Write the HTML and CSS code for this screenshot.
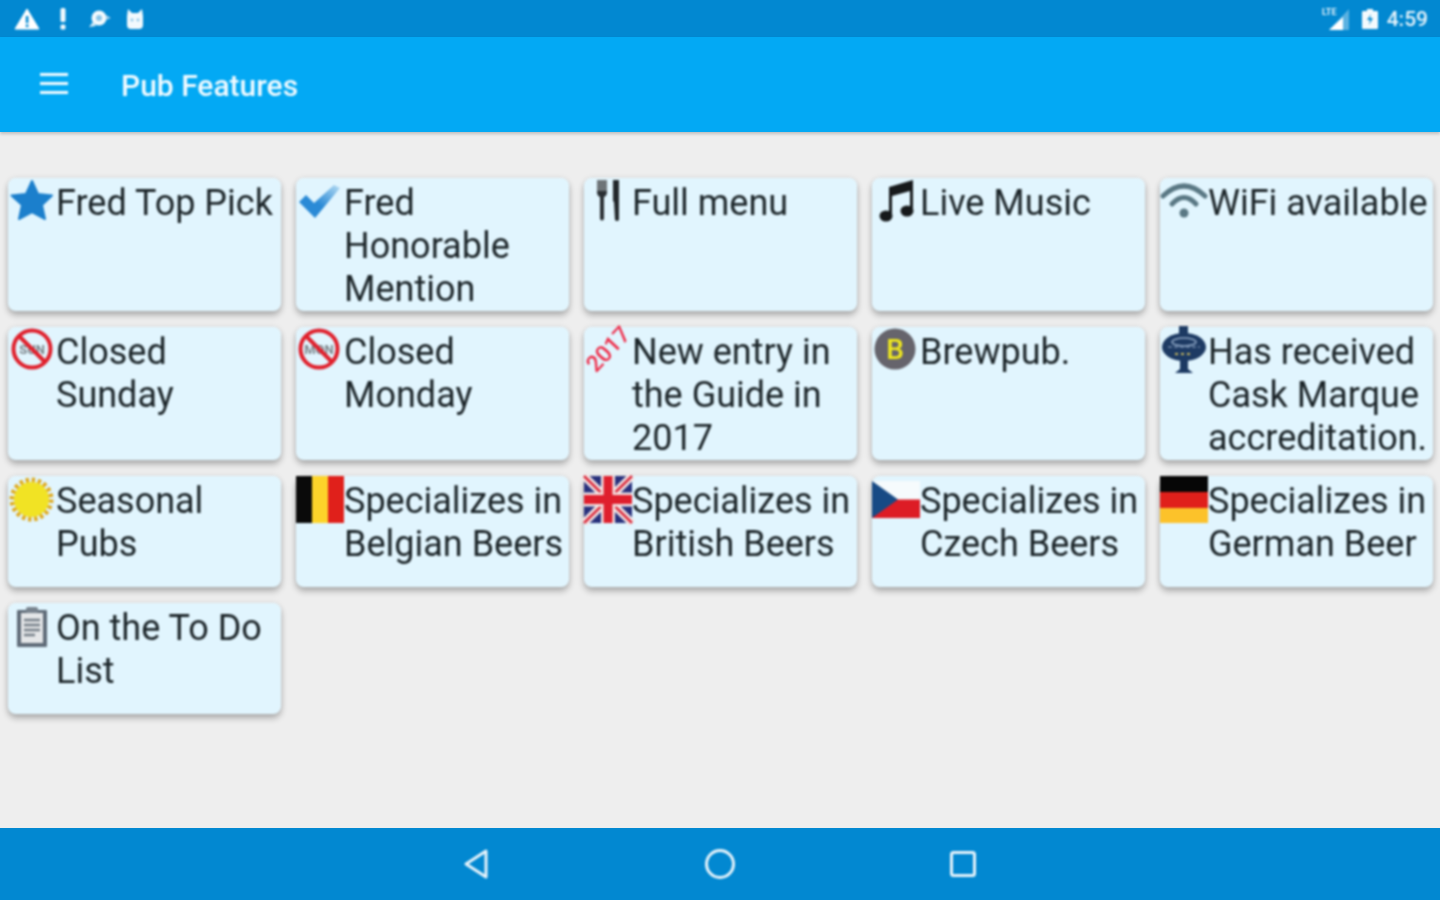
FILE: index.html
```html
<!DOCTYPE html>
<html lang="en">
<head>
    <meta charset="UTF-8">
    <meta name="viewport" content="width=device-width, initial-scale=1.0">
    <title>Pub Features</title>
    <link rel="stylesheet" href="styles.css">
</head>
<body>
    <div class="screen">
        <div class="status-bar">
            <div class="status-left">
                <svg class="st-warn" width="26" height="22" viewBox="0 0 26 22"><path d="M13 1 L25 21 H1 Z" fill="#fff" stroke="#fff" stroke-linejoin="round"/><rect x="11.8" y="8" width="2.6" height="7" fill="#0288d1"/><rect x="11.8" y="16.5" width="2.6" height="2.6" fill="#0288d1"/></svg>
                <svg class="st-bang" width="8" height="22" viewBox="0 0 8 22"><rect x="1.5" y="0" width="5" height="14" rx="1.5" fill="#f2f9fd"/><rect x="1.5" y="16.5" width="5" height="5" rx="1.5" fill="#f2f9fd"/></svg>
                <svg class="st-chat" width="24" height="20" viewBox="0 0 24 20"><circle cx="11" cy="9" r="7.5" fill="#f4fafd"/><circle cx="11" cy="9" r="3" fill="#8cc6e8"/><path d="M5 13 L1 18 L8 17 Z" fill="#d6ecf8"/><path d="M18 6 L23 9 L18 11 Z" fill="#9fd0ec"/></svg>
                <svg class="st-cat" width="20" height="22" viewBox="0 0 20 22"><path d="M2 8 L3 1 L7 5 H13 L17 1 L18 8 V17 Q18 21 14 21 H6 Q2 21 2 17 Z" fill="#f2f9fd"/><circle cx="7" cy="12" r="1.4" fill="#8cc6e8"/><circle cx="13" cy="12" r="1.4" fill="#8cc6e8"/></svg>
            </div>
            <div class="status-right">
                <svg class="st-signal" width="28" height="22" viewBox="0 0 28 22"><text x="0" y="7" class="lte-text">LTE</text><path d="M27 1 V22 H7 Z" fill="#fff" opacity=".35"/><path d="M21 9 V22 H7 Z" fill="#fff"/></svg>
                <svg class="st-batt" width="16" height="20" viewBox="0 0 16 20"><path d="M5 0 H11 V2 H15 Q16 2 16 3 V19 Q16 20 15 20 H1 Q0 20 0 19 V3 Q0 2 1 2 H5 Z" fill="#f4fafd"/><path d="M9 5 L5 11 H8 L7 16 L11 9 H8 Z" fill="#0288d1"/></svg>
                <span class="clock">4:59</span>
            </div>
        </div>

        <div class="toolbar">
            <div class="menu-icon"><span></span><span></span><span></span></div>
            <div class="toolbar-title">Pub Features</div>
        </div>

        <div class="content">
            <div class="feature-grid">
                <div class="card">
                    <svg class="icon" viewBox="-1 0 48 48"><path d="M23 3 L29 16 L43 17.5 L33 27 L36 41 L23 34 L10 41 L13 27 L2.5 17.5 L17 16 Z" fill="#1b7fcc" stroke="#1b7fcc" stroke-width="2" stroke-linejoin="round"/></svg>
                    <span class="label">Fred Top Pick</span>
                </div>
                <div class="card">
                    <svg class="icon" viewBox="0 0 48 48"><defs><linearGradient id="chk" x1="0" y1="1" x2="1" y2="0"><stop offset="0.45" stop-color="#2a8ad6"/><stop offset="1" stop-color="#b6dcf3"/></linearGradient></defs><path d="M3 24 L10 17 L18 25 L38 7 L44 10 L19 40 Z" fill="url(#chk)"/></svg>
                    <span class="label">Fred Honorable Mention</span>
                </div>
                <div class="card">
                    <svg class="icon" viewBox="0 0 48 48"><path d="M13 2 H23 V14 Q23 18 20 19 V41 Q18 44 16 41 V19 Q13 18 13 14 Z" fill="#2a2f33"/><rect x="13" y="2" width="10" height="11" fill="#6d7478"/><path d="M29 2 L35 2 V42 Q33 44 31 42 L30 24 L29 23 Z" fill="#23282b"/></svg>
                    <span class="label">Full menu</span>
                </div>
                <div class="card">
                    <svg class="icon" viewBox="0 0 48 48"><path d="M17 10 L41 3 V33 H38 V13 L20 18 V38 H17 Z" fill="#16191b"/><path d="M17 9 L41 2 V10 L17 17 Z" fill="#16191b"/><ellipse cx="14" cy="38" rx="6.5" ry="5.5" fill="#16191b"/><ellipse cx="35" cy="33" rx="6.5" ry="5.5" fill="#16191b"/></svg>
                    <span class="label">Live Music</span>
                </div>
                <div class="card">
                    <svg class="icon" viewBox="0 0 48 48"><path d="M3 18 Q24 -2 45 18" fill="none" stroke="#5a7884" stroke-width="5" stroke-linecap="round"/><path d="M12 26 Q24 13 36 26" fill="none" stroke="#5a7884" stroke-width="5" stroke-linecap="round"/><circle cx="24" cy="35" r="4.5" fill="#5a7884"/></svg>
                    <span class="label">WiFi available</span>
                </div>

                <div class="card">
                    <svg class="icon" viewBox="-1 0 48 48"><text x="23" y="27" class="no-text">SUN</text><circle cx="23" cy="22" r="18.5" fill="none" stroke="#e0202c" stroke-width="4"/><path d="M10 9 L36 35" stroke="#e0202c" stroke-width="4"/></svg>
                    <span class="label">Closed Sunday</span>
                </div>
                <div class="card">
                    <svg class="icon" viewBox="0 0 48 48"><text x="23" y="27" class="no-text">MON</text><circle cx="23" cy="22" r="18.5" fill="none" stroke="#e0202c" stroke-width="4"/><path d="M10 9 L36 35" stroke="#e0202c" stroke-width="4"/></svg>
                    <span class="label">Closed Monday</span>
                </div>
                <div class="card">
                    <svg class="icon" viewBox="0 0 48 48"><text x="24" y="30" class="year-text" transform="rotate(-47 24 22)">2017</text></svg>
                    <span class="label">New entry in the Guide in 2017</span>
                </div>
                <div class="card">
                    <svg class="icon" viewBox="0 0 48 48"><circle cx="23" cy="22" r="20.5" fill="#66646c"/><text x="23" y="32" class="brew-text">B</text></svg>
                    <span class="label">Brewpub.</span>
                </div>
                <div class="card">
                    <svg class="icon" viewBox="0 0 48 48"><rect x="19" y="-1" width="9" height="9" fill="#1d3a63"/><ellipse cx="24" cy="20" rx="22" ry="14" fill="#1d3a63"/><ellipse cx="24" cy="15" rx="12" ry="4" fill="none" stroke="#8ea6c4" stroke-width="1.5"/><path d="M8 20 H40" stroke="#6f88aa" stroke-width="1.5" stroke-dasharray="4 2"/><path d="M15 27 H33" stroke="#c8b860" stroke-width="2" stroke-dasharray="3 3"/><path d="M20 33 H28 V42 L33 46 H15 L20 42 Z" fill="#1d3a63"/></svg>
                    <span class="label">Has received Cask Marque accreditation.</span>
                </div>

                <div class="card">
                    <svg class="icon" viewBox="-1 0 48 48"><circle cx="22.5" cy="23.5" r="19.5" fill="none" stroke="#e0aa20" stroke-width="5" stroke-dasharray="3.4 2.7"/><circle cx="22.5" cy="23.5" r="17.5" fill="#f1e324"/></svg>
                    <span class="label">Seasonal Pubs</span>
                </div>
                <div class="card">
                    <svg class="icon" viewBox="0 0 48 48"><rect x="0" y="0" width="16" height="47" fill="#0a0a0a"/><rect x="16" y="0" width="16" height="47" fill="#fdd42a"/><rect x="32" y="0" width="16" height="47" fill="#e0201b"/></svg>
                    <span class="label">Specializes in Belgian Beers</span>
                </div>
                <div class="card">
                    <svg class="icon" viewBox="0 0 48 48"><rect x="0" y="0" width="48" height="47" fill="#27307c"/><path d="M0 0 L48 47 M48 0 L0 47" stroke="#f3e4e4" stroke-width="8"/><path d="M0 0 L48 47 M48 0 L0 47" stroke="#d9283a" stroke-width="2.5"/><path d="M24 0 V47 M0 23.5 H48" stroke="#f3e4e4" stroke-width="14"/><path d="M24 0 V47 M0 23.5 H48" stroke="#df1f2d" stroke-width="9"/></svg>
                    <span class="label">Specializes in British Beers</span>
                </div>
                <div class="card">
                    <svg class="icon" viewBox="0 0 48 48"><rect x="0" y="5" width="48" height="18.5" fill="#f6fbfd"/><rect x="0" y="23.5" width="48" height="18.5" fill="#dd1c25"/><path d="M0 5 L26 23.5 L0 42 Z" fill="#174a85"/></svg>
                    <span class="label">Specializes in Czech Beers</span>
                </div>
                <div class="card">
                    <svg class="icon" viewBox="0 0 48 48"><rect x="0" y="0" width="48" height="16" fill="#060606"/><rect x="0" y="16" width="48" height="16" fill="#e0201b"/><rect x="0" y="32" width="48" height="15" fill="#fcc22a"/></svg>
                    <span class="label">Specializes in German Beer</span>
                </div>

                <div class="card">
                    <svg class="icon" viewBox="-1 0 48 48"><rect x="8" y="7" width="30" height="37" rx="1" fill="#5f6b78"/><rect x="12" y="10" width="22" height="30" fill="#e4e6e8"/><rect x="17" y="4" width="12" height="6" rx="2" fill="#77828d"/><path d="M15 17 H31 M15 22 H31 M15 27 H31 M15 32 H26" stroke="#767f88" stroke-width="2.5"/></svg>
                    <span class="label">On the To Do List</span>
                </div>
            </div>
        </div>

        <div class="nav-bar">
            <svg class="nav-icon" width="28" height="32" viewBox="0 0 28 32"><path d="M23 3 V29 L3 16 Z" fill="none" stroke="#e8f4fb" stroke-width="3" stroke-linejoin="round"/></svg>
            <svg class="nav-icon" width="32" height="32" viewBox="0 0 32 32"><circle cx="16" cy="16" r="13.5" fill="none" stroke="#e8f4fb" stroke-width="3"/></svg>
            <svg class="nav-icon" width="28" height="28" viewBox="0 0 28 28"><rect x="2.5" y="2.5" width="23" height="23" rx="2" fill="none" stroke="#e8f4fb" stroke-width="3"/></svg>
        </div>
    </div>
</body>
</html>
```

FILE: styles.css
```css
body {
    margin: 0;
    font-family: Roboto, "Liberation Sans", sans-serif;
    background-color: #eeeeee;
}
.screen {
    display: flex;
    flex-direction: column;
    height: 900px;
    overflow: hidden;
}
/* the reference is an upscaled capture, so content is slightly soft */
.status-left, .status-right, .menu-icon, .toolbar-title, .feature-grid, .nav-icon {
    filter: blur(0.8px);
}
.status-bar {
    height: 37px;
    flex: none;
    display: flex;
    align-items: center;
    justify-content: space-between;
    padding: 0 12px 0 14px;
    background-color: #0288d1;
}
.status-left {
    display: flex;
    align-items: center;
}
.st-bang {
    margin-left: 19px;
}
.st-chat {
    margin-left: 21px;
}
.st-cat {
    margin-left: 13px;
}
.status-right {
    display: flex;
    align-items: center;
}
.st-signal {
    margin-right: 12px;
}
.st-batt {
    margin-right: 9px;
}
.lte-text {
    font-size: 9px;
    font-weight: 700;
    fill: #e4f2fa;
}
.clock {
    font-size: 21px;
    font-weight: 500;
    color: #e8f4fb;
}
.toolbar {
    height: 95px;
    flex: none;
    display: flex;
    align-items: center;
    position: relative;
    background-color: #03a9f4;
    box-shadow: 0 2px 3px rgba(0, 0, 0, 0.2);
}
.menu-icon {
    display: flex;
    flex-direction: column;
    gap: 6px;
    width: 28px;
    margin-left: 40px;
    margin-top: -2px;
}
.menu-icon span {
    display: block;
    height: 3px;
    background-color: #f2fbff;
}
.toolbar-title {
    margin-left: 53px;
    margin-top: 2px;
    font-size: 30px;
    font-weight: 500;
    color: #f2fbff;
}
.content {
    flex: 1;
    padding: 46px 0 0 8px;
}
.feature-grid {
    display: grid;
    grid-template-columns: repeat(5, 273px);
    column-gap: 15px;
    row-gap: 16px;
    align-items: stretch;
}
.card {
    display: flex;
    align-items: flex-start;
    min-height: 111px;
    box-sizing: border-box;
    border-radius: 8px;
    background-color: #e1f5fe;
    box-shadow: 0 4px 6px rgba(0, 0, 0, 0.28), 0 0 6px rgba(0, 0, 0, 0.08);
}
.icon {
    width: 48px;
    height: 48px;
    flex: none;
    overflow: visible;
}
.label {
    font-size: 36px;
    line-height: 43px;
    color: #1c2529;
    margin-top: 4px;
}
.no-text {
    font-size: 13px;
    font-weight: 700;
    text-anchor: middle;
    fill: #7d868c;
}
.year-text {
    font-size: 23px;
    font-weight: 500;
    text-anchor: middle;
    fill: #ee2b48;
}
.brew-text {
    font-size: 28px;
    font-weight: 500;
    text-anchor: middle;
    fill: #f1ea1d;
}
.nav-bar {
    height: 72px;
    flex: none;
    display: flex;
    align-items: center;
    justify-content: center;
    gap: 213px;
    background-color: #0288d1;
}
```
